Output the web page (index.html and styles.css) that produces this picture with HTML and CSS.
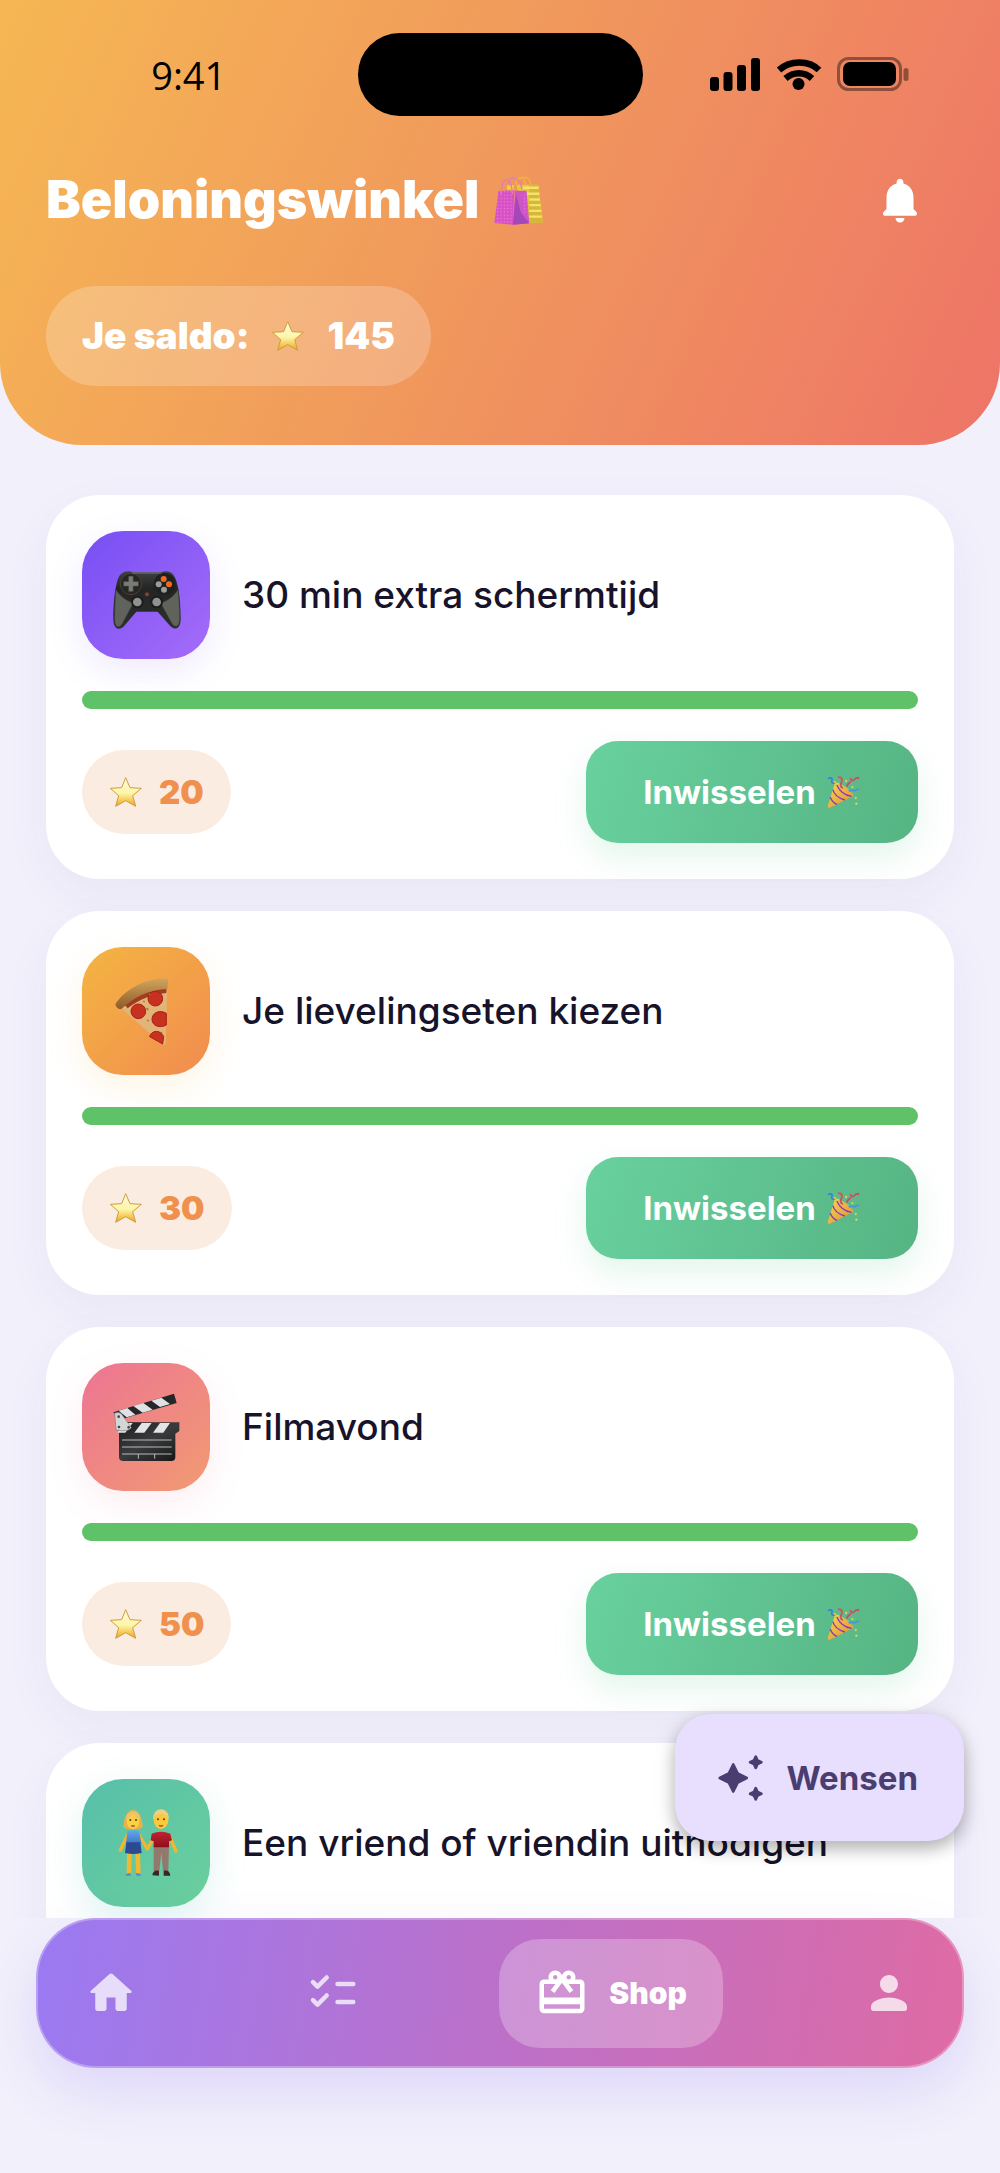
FILE: index.html
```html
<!DOCTYPE html>
<html lang="nl">
<head>
<meta charset="utf-8">
<meta name="viewport" content="width=device-width, initial-scale=1">
<title>Beloningswinkel</title>
<link rel="stylesheet" href="styles.css">
</head>
<body>
<svg class="sprite" aria-hidden="true">
  <defs>
    <linearGradient id="gold" x1="0" y1="0" x2="0" y2="1"><stop offset="0" stop-color="#fffbe0"/><stop offset=".55" stop-color="#fdf5a6"/><stop offset="1" stop-color="#eda51c"/></linearGradient>
    <linearGradient id="cone" x1="0" y1="0" x2="1" y2="1"><stop offset="0" stop-color="#fbd75a"/><stop offset="1" stop-color="#d98e2b"/></linearGradient>
    <linearGradient id="padBody" x1="0" y1="0" x2="0" y2="1"><stop offset="0" stop-color="#3f4242"/><stop offset=".3" stop-color="#232525"/><stop offset="1" stop-color="#2d2f2e"/></linearGradient>
    <linearGradient id="crust" x1="0" y1="0" x2="0" y2="1"><stop offset="0" stop-color="#d2a55f"/><stop offset="1" stop-color="#8d5a25"/></linearGradient>
    <linearGradient id="slate" x1="0" y1="0" x2="1" y2="1"><stop offset="0" stop-color="#1a1b1c"/><stop offset=".5" stop-color="#3a3b3c"/><stop offset="1" stop-color="#151515"/></linearGradient>
    <linearGradient id="top" x1="0" y1="0" x2="0" y2="1"><stop offset="0" stop-color="#62a7ec"/><stop offset="1" stop-color="#3c78c6"/></linearGradient>
    <linearGradient id="shirt" x1="0" y1="0" x2="0" y2="1"><stop offset="0" stop-color="#c3222f"/><stop offset="1" stop-color="#8c101d"/></linearGradient>
    <pattern id="dots" width="10" height="10" patternUnits="userSpaceOnUse"><path d="M2 2h4v4H2z" fill="#ef8fe3"/></pattern>
  </defs>
  <symbol id="star" viewBox="238 892 100 96">
    <path d="M287 897l13 30 34 2-26 22 9 32-30-17-30 17 9-32-25-22 34-2z" fill="url(#gold)" stroke="#cf9c40" stroke-width="3" stroke-linejoin="round"/>
  </symbol>
  <symbol id="popper" viewBox="800 228 104 102">
    <path d="M827 250c14 0 48 22 56 40l-72 36c-5 1-7-1-6-6z" fill="url(#cone)"/>
    <path d="M820 272c4 14 18 26 36 31M812 294c4 11 11 19 21 22M832 258c8 18 24 31 44 34" fill="none" stroke="#8a36b8" stroke-width="4"/>
    <path d="M806 240c7-7 14-2 11 5s6 11 11 4" fill="none" stroke="#3a80d9" stroke-width="5"/>
    <path d="M836 236c9-4 15 6 10 14s-2 14 4 18" fill="none" stroke="#d4525f" stroke-width="6"/>
    <path d="M874 237c-2 8 5 11 10 5s11-7 15-3M861 262c5-10 7-12 13-13" fill="none" stroke="#c94c60" stroke-width="5"/>
    <path d="M868 277c6-8 14 2 20-3s7-5 11-2" fill="none" stroke="#4b8fe0" stroke-width="5"/>
    <path d="M825 246l4 3-4 3zM858 243l5 3-5 3zM877 262l5 2-5 3zM887 294l5 3-4 3zM889 311l5 3-5 3z" fill="#f1d34c" stroke="#f1d34c" stroke-width="2"/>
  </symbol>
  <symbol id="bags" viewBox="80 74 152 152">
    <path d="M149 103h66l14 112-44 2z" fill="#e8c93b"/>
    <path d="M188 103h27l3 28 4 46 7 38-44 2z" fill="#d7b73a"/>
    <path d="M170 112h46M180 130h38M188 147h32M188 164h34M188 181h36M188 198h38" stroke="#f4e26b" stroke-width="7"/>
    <path d="M122 118V105l20-1v14z" fill="#edd63d"/>
    <path d="M148 102c4-28 24-28 29 0M158 86c14-12 32-4 35 17" fill="none" stroke="#efb53b" stroke-width="4"/>
    <path d="M96 122l48-2-5 102-55-5z" fill="#d650c4"/>
    <path d="M96 122l48-2-5 102-55-5z" fill="url(#dots)" opacity=".7"/>
    <path d="M146 121h34l8 97-49 4z" fill="#cf54c5"/>
    <path d="M149 132l14 54 25 32-49 4z" fill="#a347ba"/>
    <path d="M164 130h15l7 66-14-8z" fill="url(#dots)" opacity=".6"/>
    <path d="M104 132c2-60 30-60 34-1M122 100c12-28 40-20 44 16" fill="none" stroke="#e27fb6" stroke-width="4"/>
  </symbol>
  <symbol id="gamepad" viewBox="238 238 216 216">
    <path d="M268 286c14-14 28-12 38-8h86c12-5 26-4 36 7 14 16 22 74 22 132 0 36-22 36-36 17l-33-38h-64l-36 42c-14 16-33 12-33-20 0-58 8-118 20-132z" fill="url(#padBody)"/>
    <path d="M256 330c14 22 34 34 52 40l-34 64c-12 14-21 8-22-12 0-34 1-66 4-92zM442 330c-14 22-34 34-52 40l34 62c12 14 22 8 23-14 0-34-2-62-5-88z" fill="#60625c" stroke="#3f413d" stroke-width="2"/>
    <circle cx="301" cy="313" r="32" fill="#252725" stroke="#563c30" stroke-width="3"/>
    <circle cx="402" cy="313" r="33" fill="#1f2120"/>
    <path d="M293 289h15v16h16v15h-16v16h-15v-16h-15v-15h15z" fill="#777a75" stroke="#303230" stroke-width="2"/>
    <g fill="#f26a20"><circle cx="399" cy="298" r="9"/><circle cx="415" cy="314" r="9"/></g>
    <g fill="#9b9d9b"><circle cx="384" cy="314" r="9"/><circle cx="400" cy="330" r="9"/></g>
    <circle cx="349" cy="344" r="6" fill="#84432c"/>
    <g fill="#8f9291" stroke="#1c1d1d" stroke-width="6"><circle cx="320" cy="367" r="16"/><circle cx="378" cy="367" r="16"/></g>
    <path d="M304 280h88" stroke="#767978" stroke-width="3"/>
  </symbol>
  <symbol id="pizza" viewBox="148 166 216 216">
    <path d="M176 262c40-34 88-58 144-62l-5 170c-2 6-5 7-10 3z" fill="#e3b477"/>
    <path d="M190 254c40-30 80-46 128-48l-1 14c-44 4-80 18-116 46z" fill="#a23c20"/>
    <path d="M165 252c28-42 88-76 150-76 6 0 8 6 7 14l-2 18c-56 2-100 24-138 60-8 2-20-8-17-16z" fill="url(#crust)"/>
    <g fill="#c8301f" stroke="#a52318" stroke-width="3"><circle cx="284" cy="237" r="22"/><circle cx="233" cy="275" r="22"/><path d="M317 281c-20-12-43-2-43 18s24 28 43 17zM267 351c4-20 34-22 42 0l-3 22z"/></g>
    <path d="M265 223l5 3M258 265l5 6M260 300l4 5M248 244l4 3M300 337l4 3" stroke="#a86a38" stroke-width="4"/>
  </symbol>
  <symbol id="clapper" viewBox="148 154 216 216">
    <path d="M158 218l182-56 8 28-172 50z" fill="#252627"/>
    <path d="M174 213l26-8 24 20-26 8zM218 199l30-9 28 20-30 9zM272 183l30-9 26 19-30 9z" fill="#dfe2e4"/>
    <path d="M164 248h192v26l-12 8v70q0 12-12 12H188q-13 0-13-12v-70z" fill="url(#slate)"/>
    <path d="M188 250h28l-22 29h-24zM243 250h30l-22 29h-30zM298 250h30l-20 29h-31z" fill="#e2e4e5"/>
    <path d="M162 220q12-4 20 2l30 42q-10 14-46 7z" fill="#d4d5d6" stroke="#7c7d7e" stroke-width="2"/>
    <g fill="#444"><circle cx="174" cy="231" r="4"/><circle cx="175" cy="262" r="4"/><circle cx="204" cy="263" r="4"/></g>
    <path d="M184 301h149M184 322h149M184 343h149M233 343v14M282 343v14" stroke="#b7babb" stroke-width="3"/>
  </symbol>
  <symbol id="couple" viewBox="148 202 216 216">
    <path d="M201 286l-22 46M235 286l25 42 24-42M326 288l20 46" fill="none" stroke="#f3b62c" stroke-width="10" stroke-linecap="round" stroke-linejoin="round"/>
    <path d="M206 338l-1 66M231 338l2 66" stroke="#f2b82f" stroke-width="14"/>
    <path d="M279 316h46l-2 78h-16l-5-56-6 56h-17z" fill="#92786d"/>
    <path d="M188 262c2-68 56-68 58 0-8 10-50 10-58 0z" fill="#e8b14a"/>
    <path d="M200 276q17-8 36 0l6 36h-46z" fill="url(#top)"/>
    <path d="M197 308h42l4 32q-26 6-50 0z" fill="#2b4a8f"/>
    <path d="M273 282q28-12 56 0l5 20-9 3v18h-46v-18l-9-3z" fill="url(#shirt)"/>
    <ellipse cx="217" cy="245" rx="19" ry="23" fill="#fcd043"/>
    <path d="M196 240c8-5 17-10 22-18 4 8 12 14 21 18 0-34-43-34-43 0z" fill="#efc268"/>
    <ellipse cx="301" cy="241" rx="22" ry="27" fill="#fbca3c"/>
    <path d="M278 240c-5-42 51-42 46 0l-5-12c-10-6-26-6-36 0z" fill="#f0cf82"/>
    <g fill="#59371c"><circle cx="209" cy="241" r="3"/><circle cx="226" cy="241" r="3"/><circle cx="292" cy="239" r="3"/><circle cx="310" cy="239" r="3"/></g>
    <path d="M212 258q5 3 10 0M295 257q6 4 12 0" fill="none" stroke="#a8402d" stroke-width="4"/>
    <path d="M194 408q2-10 16-8v9zM226 400q14-2 16 8l-15 1z" fill="#558fda"/>
    <path d="M275 407q2-18 20-14v15zM309 393q18-4 20 15h-20z" fill="#3b2521"/>
  </symbol>
</svg>

<div class="screen">
  <header class="header">
    <div class="status">
      <time class="status__time">9:41</time>
      <span class="status__island"></span>
      <svg class="status__icons" viewBox="0 0 200 36" role="img" aria-label="Signaal, wifi en batterij">
        <g><rect x="0" y="20" width="9" height="14" rx="3"/><rect x="13.500" y="15" width="9" height="19" rx="3"/><rect x="27" y="8" width="9" height="26" rx="3"/><rect x="41" y="1" width="9" height="33" rx="3"/></g>
        <path d="M69 13C80 3 99 3 109 13M75.500 21.500c8-7 19-7 26.500 0" fill="none" stroke="#000" stroke-width="6.500"/>
        <circle cx="88.500" cy="27" r="6"/>
        <rect x="128.500" y="1.500" width="62" height="31" rx="10" fill="none" stroke="#000" stroke-opacity=".4" stroke-width="3"/>
        <rect x="133" y="5" width="53" height="24" rx="7"/>
        <rect x="193.500" y="11" width="5" height="13" rx="2.500" opacity=".4"/>
      </svg>
    </div>
    <div class="title-row">
      <h1 class="title">Beloningswinkel <svg class="title__emoji" aria-hidden="true"><use href="#bags"/></svg></h1>
      <button class="bell" type="button" aria-label="Meldingen">
        <svg class="icon" viewBox="0 0 24 24"><path d="M12 22c1.100 0 2-.9 2-2h-4c0 1.100.89 2 2 2zm6-6v-5c0-3.070-1.640-5.640-4.500-6.320V4c0-.83-.67-1.500-1.500-1.500s-1.500.67-1.500 1.500v.68C7.630 5.360 6 7.920 6 11v5l-1.290 1.290c-.63.63-.19 1.710.7 1.710h13.170c.89 0 1.340-1.080.71-1.710L18 16z"/></svg>
      </button>
    </div>
    <p class="balance"><span>Je saldo:</span><svg class="star" aria-hidden="true"><use href="#star"/></svg><span>145</span></p>
  </header>

  <main class="content">
    <ul class="rewards">
      <li class="card">
        <div class="card__head"><span class="tile tile--violet"><svg class="tile__emoji" aria-hidden="true"><use href="#gamepad"/></svg></span><h2 class="card__name">30 min extra schermtijd</h2></div>
        <progress class="bar" value="100" max="100" aria-label="Voortgang"></progress>
        <div class="card__foot"><span class="price"><svg class="star" aria-hidden="true"><use href="#star"/></svg>20</span><button class="redeem" type="button">Inwisselen<svg class="popper" aria-hidden="true"><use href="#popper"/></svg></button></div>
      </li>
      <li class="card">
        <div class="card__head"><span class="tile tile--amber"><svg class="tile__emoji" aria-hidden="true"><use href="#pizza"/></svg></span><h2 class="card__name">Je lievelingseten kiezen</h2></div>
        <progress class="bar" value="100" max="100" aria-label="Voortgang"></progress>
        <div class="card__foot"><span class="price"><svg class="star" aria-hidden="true"><use href="#star"/></svg>30</span><button class="redeem" type="button">Inwisselen<svg class="popper" aria-hidden="true"><use href="#popper"/></svg></button></div>
      </li>
      <li class="card">
        <div class="card__head"><span class="tile tile--rose"><svg class="tile__emoji" aria-hidden="true"><use href="#clapper"/></svg></span><h2 class="card__name">Filmavond</h2></div>
        <progress class="bar" value="100" max="100" aria-label="Voortgang"></progress>
        <div class="card__foot"><span class="price"><svg class="star" aria-hidden="true"><use href="#star"/></svg>50</span><button class="redeem" type="button">Inwisselen<svg class="popper" aria-hidden="true"><use href="#popper"/></svg></button></div>
      </li>
      <li class="card">
        <div class="card__head"><span class="tile tile--mint"><svg class="tile__emoji" aria-hidden="true"><use href="#couple"/></svg></span><h2 class="card__name">Een vriend of vriendin uitnodigen</h2></div>
        <progress class="bar" value="100" max="100" aria-label="Voortgang"></progress>
      </li>
    </ul>
    <button class="wishes" type="button">
      <svg class="icon" viewBox="0 0 24 24"><path d="M9 6l2 4 4 2-4 2-2 4-2-4-4-2 4-2zM19 2.500l.8 1.700L21.500 5l-1.700.8L19 7.500l-.8-1.700L16.500 5l1.700-.8zM19 16.500l.8 1.700 1.700.8-1.700.8-.8 1.700-.8-1.700-1.700-.8 1.700-.8z" stroke="currentColor" stroke-width="1.200" stroke-linejoin="round"/></svg>
      Wensen
    </button>
  </main>

  <nav class="nav" aria-label="Hoofdnavigatie">
    <a class="nav__item" href="#home" aria-label="Home"><svg class="icon" viewBox="0 0 24 24"><path d="M10 19v-5h4v5c0 .55.45 1 1 1h3c.55 0 1-.45 1-1v-7h1.700c.46 0 .68-.57.33-.87L12.670 3.600c-.38-.34-.96-.34-1.340 0l-8.360 7.530c-.34.3-.13.87.33.87H5v7c0 .55.45 1 1 1h3c.55 0 1-.45 1-1z"/></svg></a>
    <a class="nav__item" href="#taken" aria-label="Taken"><svg class="icon" viewBox="0 0 24 24"><path d="M3.100 7.200l2 2 4.100-4.100M3.100 15.200l2 2 4.100-4.100M14 8h7M14 16h7" fill="none" stroke="currentColor" stroke-width="2" stroke-linecap="round" stroke-linejoin="round"/></svg></a>
    <a class="nav__item nav__item--active" href="#shop" aria-current="page"><svg class="icon" viewBox="0 0 24 24"><path d="M20 6h-2.180c.11-.31.18-.65.18-1 0-1.660-1.340-3-3-3-1.050 0-1.960.54-2.500 1.350l-.5.67-.5-.68C10.960 2.540 10.050 2 9 2 7.340 2 6 3.340 6 5c0 .35.07.69.18 1H4c-1.110 0-1.990.89-1.990 2L2 19c0 1.110.89 2 2 2h16c1.110 0 2-.89 2-2V8c0-1.110-.89-2-2-2zm-5-2c.55 0 1 .45 1 1s-.45 1-1 1-1-.45-1-1 .45-1 1-1zM9 4c.55 0 1 .45 1 1s-.45 1-1 1-1-.45-1-1 .45-1 1-1zm11 15H4v-2h16v2zm0-5H4V8h5.080L7 10.830 8.620 12 12 7.400l3.380 4.600L17 10.830 14.920 8H20v6z"/></svg>Shop</a>
    <a class="nav__item" href="#profiel" aria-label="Profiel"><svg class="icon" viewBox="0 0 24 24"><path d="M12 12c2.210 0 4-1.790 4-4s-1.790-4-4-4-4 1.790-4 4 1.790 4 4 4zm0 2c-2.670 0-8 1.340-8 4v1c0 .55.45 1 1 1h14c.55 0 1-.45 1-1v-1c0-2.660-5.330-4-8-4z"/></svg></a>
  </nav>
</div>
</body>
</html>
```
FILE: styles.css
```css
* {
  box-sizing: border-box;
}

body {
  margin: 0;
  background: #f2f0fb;
  color: #16132a;
  font-family: Inter, "Liberation Sans", sans-serif;
  font-optical-sizing: none;
}

button {
  border: 0;
  font: inherit;
  cursor: pointer;
}

.sprite {
  position: absolute;
  width: 0;
  height: 0;
}

.icon {
  width: 54px;
  height: 54px;
  flex: none;
  fill: currentColor;
}

.star {
  width: 34px;
  height: 32px;
  flex: none;
}

.screen {
  display: flex;
  flex-direction: column;
  height: 100vh;
}

/* Header */
.header {
  flex: none;
  padding: 32px 46px 59px;
  border-radius: 0 0 82px 82px;
  background: linear-gradient(114deg, #f6b753, #f0965d 51%, #ee7467);
  color: #fff;
}

.status {
  display: grid;
  grid-template-columns: 1fr 285px 1fr;
  align-items: center;
  color: #000;
}

.status__time {
  justify-self: center;
  padding-top: 2px;
  padding-right: 26px;
  font: 500 38px/83px "Open Sans", "Noto Sans", sans-serif;
}

.status__island {
  height: 83px;
  border-radius: 42px;
  background: #000;
}

.status__icons {
  justify-self: end;
  width: 200px;
  height: 36px;
  margin-right: 44px;
}

.title-row {
  display: flex;
  align-items: center;
  justify-content: space-between;
  margin-top: 29px;
}

.title {
  display: flex;
  align-items: center;
  gap: 14px;
  margin: 0;
  font-size: 52px;
  font-weight: 900;
  line-height: 60px;
}

.title__emoji {
  width: 51px;
  height: 51px;
}

.bell {
  display: grid;
  place-items: center;
  width: 108px;
  height: 108px;
  padding: 0;
  background: none;
  color: #fff;
}

.balance {
  display: flex;
  align-items: center;
  gap: 22px;
  width: max-content;
  margin: 32px 0 0;
  padding: 28px 36px;
  border-radius: 50px;
  background: rgba(255, 255, 255, 0.22);
  font-size: 37px;
  font-weight: 900;
  line-height: 44px;
}

/* Rewards */
.content {
  position: relative;
  flex: 1;
  min-height: 0;
}

.rewards {
  display: flex;
  flex-direction: column;
  gap: 32px;
  height: 100%;
  margin: 0;
  padding: 50px 46px 0;
  overflow-y: auto;
  scrollbar-width: none;
  list-style: none;
}

.card {
  display: flex;
  flex: none;
  flex-direction: column;
  gap: 32px;
  padding: 36px;
  border-radius: 54px;
  background: #fff;
  box-shadow: 0 16px 48px rgba(80, 60, 160, 0.05);
}

.card__head,
.card__foot {
  display: flex;
  align-items: center;
}

.card__head {
  gap: 32px;
}

.card__foot {
  justify-content: space-between;
}

.card__name {
  margin: 0;
  font-size: 37px;
  font-weight: 500;
  line-height: 44px;
}

.tile {
  display: grid;
  place-items: center;
  flex: none;
  width: 128px;
  height: 128px;
  border-radius: 41px;
}

.tile__emoji {
  width: 72px;
  height: 72px;
}

.tile--violet {
  background: linear-gradient(135deg, #774ff4, #a56cf9);
  box-shadow: 0 12px 36px rgba(124, 82, 245, 0.12);
}

.tile--amber {
  background: linear-gradient(135deg, #f4b541, #f18c50);
  box-shadow: 0 12px 36px rgba(246, 181, 60, 0.14);
}

.tile--rose {
  background: linear-gradient(135deg, #ed7593, #f19a72);
  box-shadow: 0 12px 36px rgba(238, 116, 148, 0.13);
}

.tile--mint {
  background: linear-gradient(135deg, #57bfaa, #6bd09c);
  box-shadow: 0 12px 36px rgba(80, 200, 180, 0.18);
}

.bar {
  appearance: none;
  display: block;
  width: 100%;
  height: 18px;
  border: 0;
  border-radius: 9px;
  background: #e8e6f2;
  overflow: hidden;
}

.bar::-webkit-progress-bar {
  background: #e8e6f2;
}

.bar::-webkit-progress-value {
  background: #5fc269;
}

.bar::-moz-progress-bar {
  background: #5fc269;
}

.price {
  display: flex;
  align-items: center;
  gap: 16px;
  padding: 22px 27px;
  border-radius: 42px;
  background: #fbece1;
  color: #ef904e;
  font-size: 33px;
  font-weight: 900;
  line-height: 40px;
}

.redeem {
  display: flex;
  align-items: center;
  justify-content: center;
  gap: 10px;
  width: 332px;
  height: 102px;
  border-radius: 32px;
  background: linear-gradient(107deg, #68d19e, #56b483);
  box-shadow: 0 14px 32px rgba(90, 200, 140, 0.17);
  color: #fff;
  font-size: 33px;
  font-weight: 700;
}

.popper {
  width: 35px;
  height: 34px;
}

.wishes {
  position: absolute;
  right: 36px;
  bottom: 77px;
  display: flex;
  align-items: center;
  gap: 20px;
  height: 127px;
  padding: 0 46px 0 38px;
  border-radius: 36px;
  background: #e8defe;
  box-shadow: 0 8px 16px rgba(0, 0, 0, 0.24), 0 4px 24px rgba(0, 0, 0, 0.1);
  color: #4a3d70;
  font-size: 33px;
  font-weight: 700;
}

/* Bottom navigation */
.nav {
  position: relative;
  display: flex;
  flex: none;
  align-items: center;
  justify-content: space-between;
  height: 150px;
  margin: 0 36px 105px;
  padding: 0 17px;
  border: 2px solid rgba(255, 255, 255, 0.28);
  border-radius: 60px;
  background: linear-gradient(99deg, #9a7af2, #bb70c9 50%, #df6ba4) border-box;
  box-shadow: 0 24px 54px rgba(120, 90, 240, 0.16);
}

.nav__item {
  display: flex;
  align-items: center;
  padding: 0 29px;
  color: rgba(255, 255, 255, 0.75);
}

.nav__item--active {
  gap: 20px;
  height: 109px;
  padding: 0 36px;
  border-radius: 41px;
  background: rgba(255, 255, 255, 0.25);
  color: #fff;
  font-size: 30px;
  font-weight: 900;
  text-decoration: none;
}
```
